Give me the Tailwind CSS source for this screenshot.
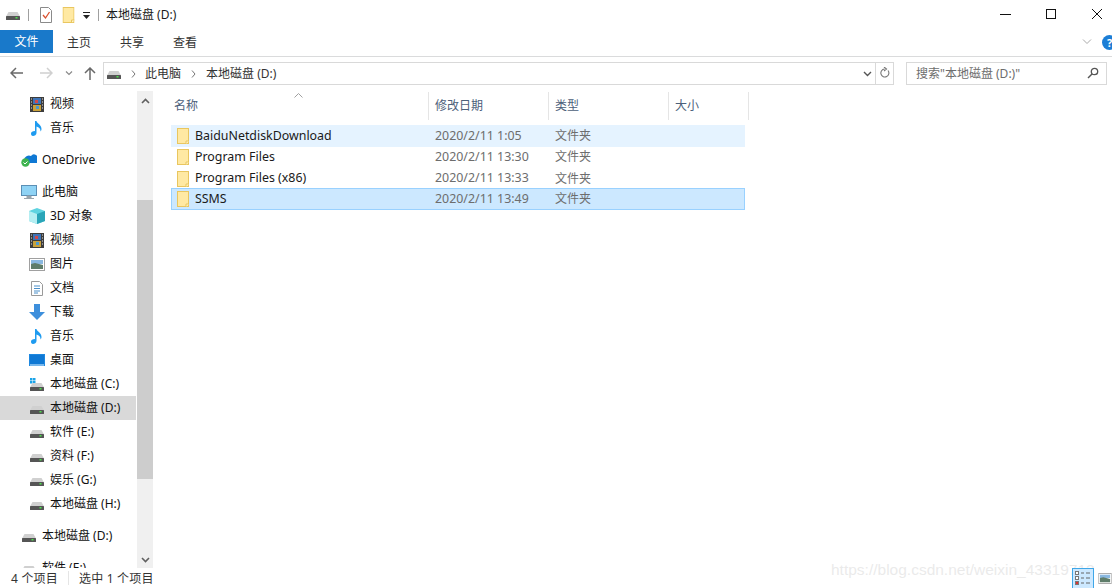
<!DOCTYPE html>
<html lang="zh-CN">
<head>
<meta charset="UTF-8">
<title>本地磁盘 (D:)</title>
<script src="https://cdn.jsdelivr.net/npm/@tailwindcss/browser@4"></script>
</head>
<body class="bg-white overflow-hidden">
<!-- icons -->
<svg width="0" height="0" class="absolute">
  <symbol id="drive" viewBox="0 0 14 8">
    <path d="M2.500 0h9L14 4.500H0z" fill="#d0d0d0"/>
    <rect x="0" y="4" width="14" height="4" rx="0.500" fill="#555"/>
    <rect x="9.500" y="5" width="2" height="1.500" fill="#4ee04e"/>
  </symbol>
  <symbol id="folder" viewBox="0 0 12 16">
    <rect x="0.500" y="0.500" width="11" height="15" fill="#ffe9a3" stroke="#e9c65f"/>
    <path d="M9 16v-3h3" fill="#fff4c8" stroke="#e9c65f"/>
  </symbol>
  <symbol id="film" viewBox="0 0 14 15">
    <rect width="14" height="15" fill="#3c3c3c"/>
    <rect x="3" y="1" width="8" height="6" fill="#3f74b8"/>
    <rect x="3" y="8" width="8" height="6" fill="#c9a13a"/>
    <rect x="5" y="3" width="3" height="3" fill="#d04a4a"/>
    <rect x="6" y="9" width="3" height="3" fill="#4a9ad0"/>
    <path d="M1 2h1M1 5h1M1 8h1M1 11h1M12 2h1M12 5h1M12 8h1M12 11h1" stroke="#e0e0e0"/>
  </symbol>
  <symbol id="note" viewBox="0 0 12 16">
    <path d="M4 1h1.500c.5 2.500 5 3.500 5 8 0 1-.5 2-1 2.500.3-2.500-1.500-4.500-4-5V13c0 2-2 3-3.500 3S0 15 0 13.500 1.500 11 4 11z" fill="#1e9bf0"/>
  </symbol>
  <symbol id="picture" viewBox="0 0 16 13">
    <rect x="0.500" y="0.500" width="15" height="12" fill="#fff" stroke="#a0a0a0"/>
    <rect x="2" y="2" width="12" height="4" fill="#8ab8e0"/>
    <path d="M2 6l4-1 8 2v4H2z" fill="#5f7d6a"/>
  </symbol>
</svg>

<div class="relative w-[1112px] h-[588px] flex flex-col font-['Noto_Sans','Noto_Sans_CJK_SC',sans-serif] text-[12px] text-[#1a1a1a] overflow-hidden">

  <!-- title bar -->
  <div class="h-[30px] flex items-center shrink-0">
    <svg class="ml-[6px] w-[14px] h-[8px] mt-[1px]"><use href="#drive"/></svg>
    <div class="ml-[8px] w-px h-[12px] bg-[#a0a0a0]"></div>
    <svg class="ml-[11px] w-[12px] h-[16px]" viewBox="0 0 12 16"><path d="M.5.500h8l3 3v12H.5z" fill="#fff" stroke="#8a8a8a"/><path d="M3 8l2.500 3L9.500 5" fill="none" stroke="#d9502e" stroke-width="1.300"/></svg>
    <svg class="ml-[10px] w-[13px] h-[16px]" viewBox="0 0 12 16"><use href="#folder"/></svg>
    <svg class="ml-[8px] w-[7px] h-[7px] mt-[1px]" viewBox="0 0 7 7"><path d="M0 0h7v1H0zM0 3h7L3.500 7z" fill="#222"/></svg>
    <div class="ml-[8px] w-px h-[12px] bg-[#a0a0a0]"></div>
    <span class="ml-[7px]">本地磁盘 (D:)</span>
    <div class="ml-auto mr-[-6px] flex items-center h-full">
      <svg class="w-[46px] h-[30px]" viewBox="0 0 46 30"><path d="M18 14.500h11" stroke="#111"/></svg>
      <svg class="w-[46px] h-[30px]" viewBox="0 0 46 30"><rect x="18.500" y="9.500" width="9" height="9" fill="none" stroke="#111"/></svg>
      <svg class="w-[44px] h-[30px]" viewBox="0 0 44 30"><path d="M18 9l10 10M28 9L18 19" stroke="#111"/></svg>
    </div>
  </div>

  <!-- ribbon tabs -->
  <div class="h-[27px] flex shrink-0 border-b border-[#dadbdc] relative">
    <div class="w-[53px] h-[23px] pt-[1px] bg-[#1979ca] text-white flex items-center justify-center">文件</div>
    <div class="h-[23px] pt-[2px] flex items-center pl-[14px] gap-[29px] text-[#333]"><span>主页</span><span>共享</span><span>查看</span></div>
    <div class="ml-auto flex items-center h-[24px]">
      <svg class="w-[10px] h-[6px] mr-[10px]" viewBox="0 0 10 6"><path d="M1 .5l4 4 4-4" fill="none" stroke="#a8a8a8"/></svg>
      <div class="w-[15px] h-[15px] mr-[-5px] rounded-full bg-[#1c7ed6] text-white font-bold text-[11px] leading-[15px] text-center">?</div>
    </div>
  </div>

  <!-- address row -->
  <div class="h-[34px] flex items-center shrink-0 text-[#333] pb-[2px]">
    <svg class="ml-[10px] w-[13px] h-[12px]" viewBox="0 0 13 12"><path d="M6 1L1 6l5 5M1 6h12" fill="none" stroke="#6a6a6a" stroke-width="1.500"/></svg>
    <svg class="ml-[17px] w-[13px] h-[12px]" viewBox="0 0 13 12"><path d="M7 1l5 5-5 5M12 6H0" fill="none" stroke="#d0d0d0" stroke-width="1.500"/></svg>
    <svg class="ml-[12px] w-[8px] h-[5px]" viewBox="0 0 8 5"><path d="M1 .5l3 3 3-3" fill="none" stroke="#8a8a8a" stroke-width="1.200"/></svg>
    <svg class="ml-[11px] w-[12px] h-[13px]" viewBox="0 0 12 13"><path d="M1 6l5-5 5 5M6 1v12" fill="none" stroke="#6a6a6a" stroke-width="1.500"/></svg>
    <div class="ml-[7px] w-[791px] h-[23px] border border-[#d9d9d9] flex items-center pt-[2px]">
      <svg class="ml-[3px] w-[14px] h-[8px] mt-[1px]"><use href="#drive"/></svg>
      <svg class="ml-[10px] w-[5px] h-[8px]" viewBox="0 0 5 8"><path d="M1 .5L4 4 1 7.500" fill="none" stroke="#777"/></svg>
      <span class="ml-[9px]">此电脑</span>
      <svg class="ml-[10px] w-[5px] h-[8px]" viewBox="0 0 5 8"><path d="M1 .5L4 4 1 7.500" fill="none" stroke="#777"/></svg>
      <span class="ml-[10px]">本地磁盘 (D:)</span>
      <svg class="ml-auto mr-[3px] w-[9px] h-[6px]" viewBox="0 0 9 6"><path d="M1 1l3.500 3.500L8 1" fill="none" stroke="#555" stroke-width="1.400"/></svg>
      <div class="w-[18px] h-[21px] mt-[-2px] border-l border-[#d9d9d9] flex items-center justify-center">
        <svg class="w-[11px] h-[12px]" viewBox="0 0 11 12"><path d="M9 3.500A4 4 0 1 1 5.500 2M5 0l2.500 2L5 4" fill="none" stroke="#777" stroke-width="1.100"/></svg>
      </div>
    </div>
    <div class="ml-[12px] w-[201px] h-[23px] border border-[#d9d9d9] flex items-center pt-[2px] pl-[9px] pr-[7px] text-[#6d6d6d]">
      <span>搜索"本地磁盘 (D:)"</span>
      <svg class="ml-auto w-[12px] h-[12px] mt-[-2px]" viewBox="0 0 12 12"><circle cx="7.500" cy="4.500" r="3.200" fill="none" stroke="#555" stroke-width="1.300"/><path d="M5 7l-4 4" stroke="#555" stroke-width="1.500"/></svg>
    </div>
  </div>

  <!-- body -->
  <div class="flex-1 flex min-h-0">
    <!-- nav pane -->
    <div class="w-[137px] shrink-0 overflow-hidden pt-[1px] text-[#111]">
      <div class="h-[24px] flex items-center pl-[30px] gap-[6px]"><svg class="w-[14px] h-[15px]"><use href="#film"/></svg><span>视频</span></div>
      <div class="h-[24px] flex items-center pl-[31px] gap-[7px]"><svg class="w-[12px] h-[16px]"><use href="#note"/></svg><span>音乐</span></div>
      <div class="h-[24px] mt-[8px] flex items-center pl-[21px] gap-[5px]">
        <svg class="w-[16px] h-[14px]" viewBox="0 0 16 14"><path d="M3 7a5 5 0 0 1 7-4 3.500 3.500 0 0 1 6 4v3H3z" fill="#0f78d4"/><circle cx="4.500" cy="9.500" r="4.200" fill="#3fb34f"/><path d="M2.500 9.500l1.500 1.500 2.500-2.500" fill="none" stroke="#fff"/></svg>
        <span>OneDrive</span></div>
      <div class="h-[24px] mt-[8px] flex items-center pl-[21px] gap-[5px]">
        <svg class="w-[16px] h-[15px]" viewBox="0 0 16 15"><rect x=".5" y=".5" width="15" height="10" fill="#8fd3f5" stroke="#5b8fb5"/><path d="M6 11h4v2H6zM3 13.500h10" fill="#9aa5ad" stroke="#9aa5ad"/></svg>
        <span>此电脑</span></div>
      <div class="h-[24px] flex items-center pl-[29px] gap-[5px]">
        <svg class="w-[16px] h-[16px]" viewBox="0 0 16 16"><path d="M8 0l8 3v10l-8 3-8-3V3z" fill="#5ed3e0"/><path d="M8 6l8-3v10l-8 3z" fill="#2aa5b8"/><path d="M0 3l8 3v10l-8-3z" fill="#b5eef2"/></svg>
        <span>3D 对象</span></div>
      <div class="h-[24px] flex items-center pl-[30px] gap-[6px]"><svg class="w-[14px] h-[15px]"><use href="#film"/></svg><span>视频</span></div>
      <div class="h-[24px] flex items-center pl-[29px] gap-[5px]"><svg class="w-[16px] h-[13px]"><use href="#picture"/></svg><span>图片</span></div>
      <div class="h-[24px] flex items-center pl-[31px] gap-[7px]">
        <svg class="w-[12px] h-[15px]" viewBox="0 0 12 15"><path d="M.5.500h8l3 3v11H.5z" fill="#fff" stroke="#9a9a9a"/><path d="M3 5h6M3 7.500h6M3 10h6M3 12h4" stroke="#4b8fc9"/></svg>
        <span>文档</span></div>
      <div class="h-[24px] flex items-center pl-[29px] gap-[5px]">
        <svg class="w-[16px] h-[16px]" viewBox="0 0 16 16"><path d="M5 0h6v8h5l-8 8-8-8h5z" fill="#3d8fdc"/></svg>
        <span>下载</span></div>
      <div class="h-[24px] flex items-center pl-[31px] gap-[7px]"><svg class="w-[12px] h-[16px]"><use href="#note"/></svg><span>音乐</span></div>
      <div class="h-[24px] flex items-center pl-[29px] gap-[5px]">
        <svg class="w-[16px] h-[12px]" viewBox="0 0 16 12"><rect width="16" height="12" fill="#1e88e0"/><rect x="1" y="1" width="14" height="9" fill="#0f78d4"/><rect x="1" y="10.500" width="14" height="1" fill="#cfe6f8"/></svg>
        <span>桌面</span></div>
      <div class="h-[24px] flex items-center pl-[30px] gap-[6px]">
        <svg class="w-[14px] h-[13px]" viewBox="0 0 14 13"><rect x="0" y="0" width="2.500" height="2.500" fill="#1aa3e8"/><rect x="3" y="0" width="2.500" height="2.500" fill="#1aa3e8"/><rect x="0" y="3" width="2.500" height="2.500" fill="#1aa3e8"/><rect x="3" y="3" width="2.500" height="2.500" fill="#1aa3e8"/><svg x="0" y="5" width="14" height="8"><use href="#drive"/></svg></svg>
        <span>本地磁盘 (C:)</span></div>
      <div class="h-[24px] mr-[1px] flex items-center pl-[30px] gap-[6px] bg-[#d9d9d9]"><svg class="w-[14px] h-[8px] mt-[3px]"><use href="#drive"/></svg><span>本地磁盘 (D:)</span></div>
      <div class="h-[24px] flex items-center pl-[30px] gap-[6px]"><svg class="w-[14px] h-[8px] mt-[3px]"><use href="#drive"/></svg><span>软件 (E:)</span></div>
      <div class="h-[24px] flex items-center pl-[30px] gap-[6px]"><svg class="w-[14px] h-[8px] mt-[3px]"><use href="#drive"/></svg><span>资料 (F:)</span></div>
      <div class="h-[24px] flex items-center pl-[30px] gap-[6px]"><svg class="w-[14px] h-[8px] mt-[3px]"><use href="#drive"/></svg><span>娱乐 (G:)</span></div>
      <div class="h-[24px] flex items-center pl-[30px] gap-[6px]"><svg class="w-[14px] h-[8px] mt-[3px]"><use href="#drive"/></svg><span>本地磁盘 (H:)</span></div>
      <div class="h-[24px] mt-[8px] flex items-center pl-[22px] gap-[6px]"><svg class="w-[14px] h-[8px] mt-[3px]"><use href="#drive"/></svg><span>本地磁盘 (D:)</span></div>
      <div class="h-[24px] mt-[8px] flex items-center pl-[22px] gap-[6px]"><svg class="w-[14px] h-[8px] mt-[3px]"><use href="#drive"/></svg><span>软件 (E:)</span></div>
    </div>

    <!-- scrollbar -->
    <div class="w-[16px] shrink-0 bg-[#f0f0f0] flex flex-col">
      <div class="h-[19px] flex items-center justify-center">
        <svg class="w-[9px] h-[6px]" viewBox="0 0 9 6"><path d="M1 5l3.500-3.500L8 5" fill="none" stroke="#606060" stroke-width="1.600"/></svg>
      </div>
      <div class="mt-[90px] h-[279px] bg-[#cdcdcd]"></div>
      <div class="mt-auto h-[17px] flex items-center justify-center">
        <svg class="w-[9px] h-[6px]" viewBox="0 0 9 6"><path d="M1 1l3.500 3.500L8 1" fill="none" stroke="#606060" stroke-width="1.600"/></svg>
      </div>
    </div>

    <!-- file list -->
    <div class="flex-1 min-w-0 pl-[18px] flex flex-col">
      <div class="relative h-[28px] mt-[1px] flex text-[#4c607a]">
        <svg class="absolute left-[123px] top-[1px] w-[9px] h-[5px]" viewBox="0 0 9 5"><path d="M.5 4.500l4-4 4 4" fill="none" stroke="#a0a0a0"/></svg>
        <div class="w-[258px] pl-[3px] flex items-center border-r border-[#e5e5e5]">名称</div>
        <div class="w-[120px] pl-[6px] flex items-center border-r border-[#e5e5e5]">修改日期</div>
        <div class="w-[120px] pl-[6px] flex items-center border-r border-[#e5e5e5]">类型</div>
        <div class="w-[80px] pl-[6px] flex items-center border-r border-[#e5e5e5]">大小</div>
      </div>
      <div class="w-[574px] mt-[5px] text-[#6d6d6d]">
        <div class="h-[22px] flex items-center bg-[#e5f3ff]">
          <svg class="ml-[6px] w-[12px] h-[16px] shrink-0"><use href="#folder"/></svg>
          <span class="ml-[6px] w-[240px] text-[#1a1a1a] text-[12.4px]">BaiduNetdiskDownload</span>
          <span class="w-[120px] text-[12.4px]">2020/2/11 1:05</span><span>文件夹</span>
        </div>
        <div class="h-[20px] flex items-center">
          <svg class="ml-[6px] w-[12px] h-[16px] shrink-0"><use href="#folder"/></svg>
          <span class="ml-[6px] w-[240px] text-[#1a1a1a] text-[12.4px]">Program Files</span>
          <span class="w-[120px] text-[12.4px]">2020/2/11 13:30</span><span>文件夹</span>
        </div>
        <div class="h-[21px] pt-[2px] flex items-center">
          <svg class="ml-[6px] w-[12px] h-[16px] shrink-0"><use href="#folder"/></svg>
          <span class="ml-[6px] w-[240px] text-[#1a1a1a] text-[12.4px]">Program Files (x86)</span>
          <span class="w-[120px] text-[12.4px]">2020/2/11 13:33</span><span>文件夹</span>
        </div>
        <div class="h-[22px] flex items-center bg-[#cce8ff] border border-[#99d1ff]">
          <svg class="ml-[5px] w-[12px] h-[16px] shrink-0"><use href="#folder"/></svg>
          <span class="ml-[6px] w-[240px] text-[#1a1a1a] text-[12.4px]">SSMS</span>
          <span class="w-[120px] text-[12.4px]">2020/2/11 13:49</span><span>文件夹</span>
        </div>
      </div>
    </div>
  </div>

  <!-- status bar -->
  <div class="h-[20px] shrink-0 flex items-center text-[#333] pl-[11px] relative bg-white">
    <span class="tracking-[0.2px] pt-[2px]">4 个项目</span>
    <div class="ml-[10px] w-px h-[14px] bg-[#e5e5e5]"></div>
    <span class="ml-[10px] tracking-[0.2px] pt-[2px]">选中 1 个项目</span>
    <div class="ml-auto flex items-center relative z-10">
      <div class="w-[22px] h-[20px] bg-[#cce8ff] border border-[#3fa7e8] border-b-0 flex items-center justify-center">
        <svg class="w-[16px] h-[15px]" viewBox="0 0 16 15"><rect x=".5" y=".5" width="3" height="3" fill="#fff" stroke="#777"/><rect x=".5" y="5.500" width="3" height="3" fill="#fff" stroke="#777"/><rect x=".5" y="10.500" width="3" height="3" fill="#d33" stroke="#777"/><path d="M6 2h3M11 2h4M6 7h3M11 7h4M6 12h3M11 12h4" stroke="#666"/></svg>
      </div>
      <svg class="ml-[4px] w-[14px] h-[11px]" viewBox="0 0 16 13"><use href="#picture"/></svg>
    </div>
  </div>

  <!-- watermark over the window -->
  <div class="absolute left-[831px] top-[557px] font-['Liberation_Sans',sans-serif] text-[15.5px] leading-[26px] text-[#dcdcdc]/60 whitespace-nowrap">https://blog.csdn.net/weixin_43319713</div>
</div>
</body>
</html>
